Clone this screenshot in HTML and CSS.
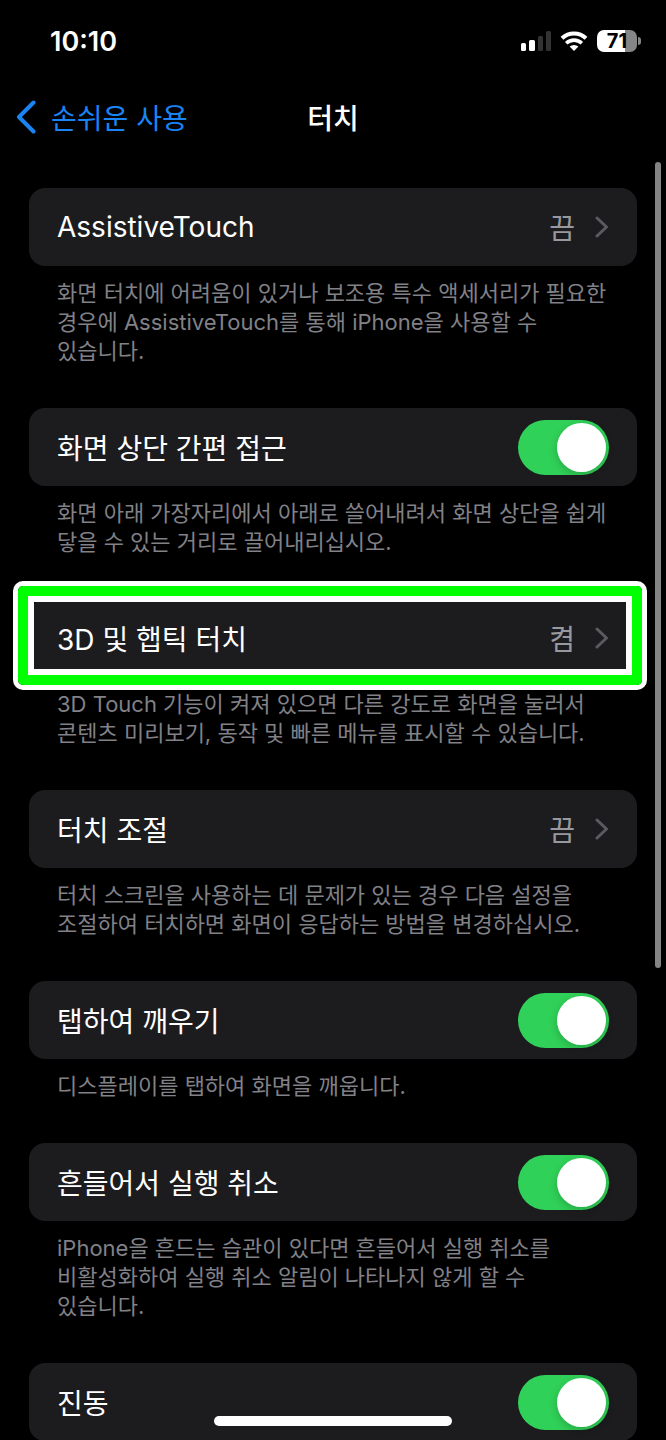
FILE: index.html
```html
<!DOCTYPE html>
<html lang="ko">
<head>
  <meta charset="UTF-8" />
  <meta name="viewport" content="width=device-width, initial-scale=1.0"/>
  <title>터치</title>
  <link rel="stylesheet" href="styles.css">
</head>
<body>

<div class="screen">
  <div class="status">
    <span class="time">10:10</span>
    <div class="status-icons">
      <svg width="30" height="20" viewBox="0 0 30 20">
        <rect x="0" y="12" width="5" height="8" rx="1.5" fill="#fff"/>
        <rect x="8" y="9" width="6" height="11" rx="1.5" fill="#fff"/>
        <rect x="17" y="5" width="5" height="15" rx="1.5" fill="#333"/>
        <rect x="25" y="0" width="5" height="20" rx="1.5" fill="#333"/>
      </svg>
      <svg width="28" height="20" viewBox="0 0 28 20">
        <path d="M2 7.200a17.400 17.400 0 0 1 24 0" fill="none" stroke="#fff" stroke-width="4"/>
        <path d="M6.200 12.200a11.400 11.400 0 0 1 15.600 0" fill="none" stroke="#fff" stroke-width="3.600"/>
        <path d="M9.600 15.600a6.600 6.600 0 0 1 8.800 0L14 20z" fill="#fff"/>
      </svg>
      <div class="battery"><span>71</span></div>
    </div>
  </div>

  <header class="nav">
    <a href="#" class="back">
      <svg width="20" height="34" viewBox="0 0 20 34"><path d="M17.500 2.500L3 17l14.500 14.500" fill="none" stroke="currentColor" stroke-width="4" stroke-linecap="round" stroke-linejoin="round"/></svg>
      손쉬운 사용
    </a>
    <h1>터치</h1>
  </header>

  <main class="list">
    <section>
      <button class="row">
        <span class="label">AssistiveTouch</span>
        <span class="value">끔</span>
        <svg class="chevron" viewBox="0 0 14 22"><path d="M2 2l9.500 9L2 20"/></svg>
      </button>
      <p>화면 터치에 어려움이 있거나 보조용 특수 액세서리가 필요한 경우에 AssistiveTouch를 통해 iPhone을 사용할 수 있습니다.</p>
    </section>

    <section>
      <label class="row">
        <span class="label">화면 상단 간편 접근</span>
        <input type="checkbox" class="switch" checked>
      </label>
      <p>화면 아래 가장자리에서 아래로 쓸어내려서 화면 상단을 쉽게 닿을 수 있는 거리로 끌어내리십시오.</p>
    </section>

    <section>
      <button class="row highlight">
        <span class="label">3D 및 햅틱 터치</span>
        <span class="value">켬</span>
        <svg class="chevron" viewBox="0 0 14 22"><path d="M2 2l9.500 9L2 20"/></svg>
      </button>
      <p>3D Touch 기능이 켜져 있으면 다른 강도로 화면을 눌러서 콘텐츠 미리보기, 동작 및 빠른 메뉴를 표시할 수 있습니다.</p>
    </section>

    <section>
      <button class="row">
        <span class="label">터치 조절</span>
        <span class="value">끔</span>
        <svg class="chevron" viewBox="0 0 14 22"><path d="M2 2l9.500 9L2 20"/></svg>
      </button>
      <p>터치 스크린을 사용하는 데 문제가 있는 경우 다음 설정을 조절하여 터치하면 화면이 응답하는 방법을 변경하십시오.</p>
    </section>

    <section>
      <label class="row">
        <span class="label">탭하여 깨우기</span>
        <input type="checkbox" class="switch" checked>
      </label>
      <p>디스플레이를 탭하여 화면을 깨웁니다.</p>
    </section>

    <section>
      <label class="row">
        <span class="label">흔들어서 실행 취소</span>
        <input type="checkbox" class="switch" checked>
      </label>
      <p>iPhone을 흔드는 습관이 있다면 흔들어서 실행 취소를 비활성화하여 실행 취소 알림이 나타나지 않게 할 수 있습니다.</p>
    </section>

    <section>
      <label class="row">
        <span class="label">진동</span>
        <input type="checkbox" class="switch" checked>
      </label>
    </section>
  </main>

  <div class="scrollbar"></div>
  <div class="home-bar"></div>
</div>

</body>
</html>
```
FILE: styles.css
```css
* {
  box-sizing: border-box;
}
body {
  margin: 0;
  background: #000;
  color: #fff;
  font-family: Inter, "Noto Sans CJK KR", sans-serif;
  font-size: 28px;
  font-weight: 400;
  word-break: keep-all;
}
.screen {
  position: relative;
  height: 100vh;
  overflow: hidden;
}
.status {
  display: flex;
  justify-content: space-between;
  align-items: center;
  height: 82px;
  padding: 0 26px 0 50px;
}
.time {
  font-size: 27px;
  font-weight: 600;
}
.status-icons {
  display: flex;
  align-items: center;
  gap: 9px;
}
.battery {
  position: relative;
  width: 40px;
  height: 22px;
  margin-right: 3px;
  border-radius: 7px;
  background: linear-gradient(90deg, #fff 71%, #868686 71%);
  color: #000;
  font-size: 20px;
  font-weight: 700;
  line-height: 22px;
  text-align: center;
}
.battery::after {
  content: "";
  position: absolute;
  left: 41px;
  top: 7px;
  width: 3px;
  height: 8px;
  border-radius: 0 4px 4px 0;
  background: #868686;
}
.nav {
  display: grid;
  grid-template-columns: 1fr auto 1fr;
  align-items: center;
  height: 70px;
  padding: 0 16px;
}
.back {
  display: flex;
  align-items: center;
  gap: 15px;
  color: #1a84f5;
  text-decoration: none;
}
.nav h1 {
  margin: 0;
  font-size: 28px;
  font-weight: 500;
}
.list {
  padding: 36px 29px 0;
}
.row {
  position: relative;
  display: flex;
  align-items: center;
  width: 100%;
  height: 78px;
  padding: 0 28px;
  border: none;
  border-radius: 16px;
  background: #1c1c1e;
  color: #fff;
  font: inherit;
  text-align: left;
}
.label {
  flex: 1;
}
.value {
  color: #98989f;
}
.chevron {
  width: 14px;
  height: 22px;
  margin-left: 20px;
  fill: none;
  stroke: #5b5b5f;
  stroke-width: 3;
  stroke-linecap: round;
  stroke-linejoin: round;
}
.list p {
  margin: 0;
  padding: 13px 20px 42px 28px;
  color: #818187;
  font-size: 22px;
  line-height: 29px;
}
.switch {
  appearance: none;
  display: flex;
  align-items: center;
  justify-content: flex-end;
  width: 91px;
  height: 55px;
  margin: 0;
  padding: 3px;
  border-radius: 28px;
  background: #30d158;
}
.switch::before {
  content: "";
  width: 49px;
  height: 49px;
  border-radius: 50%;
  background: #fff;
  box-shadow: 0 3px 8px rgba(0, 0, 0, 0.2);
}
.switch:not(:checked) {
  justify-content: flex-start;
  background: #39393d;
}
/* green frame around the 3D touch row */
.highlight::after {
  content: "";
  position: absolute;
  inset: -13px -5px -8px -11px;
  border: 10px solid #0f0;
  border-radius: 5px;
  box-shadow: 0 0 0 5px #fff, inset 0 0 0 6px #fff;
}
.scrollbar {
  position: absolute;
  top: 162px;
  right: 5px;
  width: 6px;
  height: 56%;
  border-radius: 3px;
  background: #848484;
}
.home-bar {
  position: absolute;
  bottom: 14px;
  left: 50%;
  width: 238px;
  height: 10px;
  margin-left: -119px;
  border-radius: 5px;
  background: #fff;
}
```
